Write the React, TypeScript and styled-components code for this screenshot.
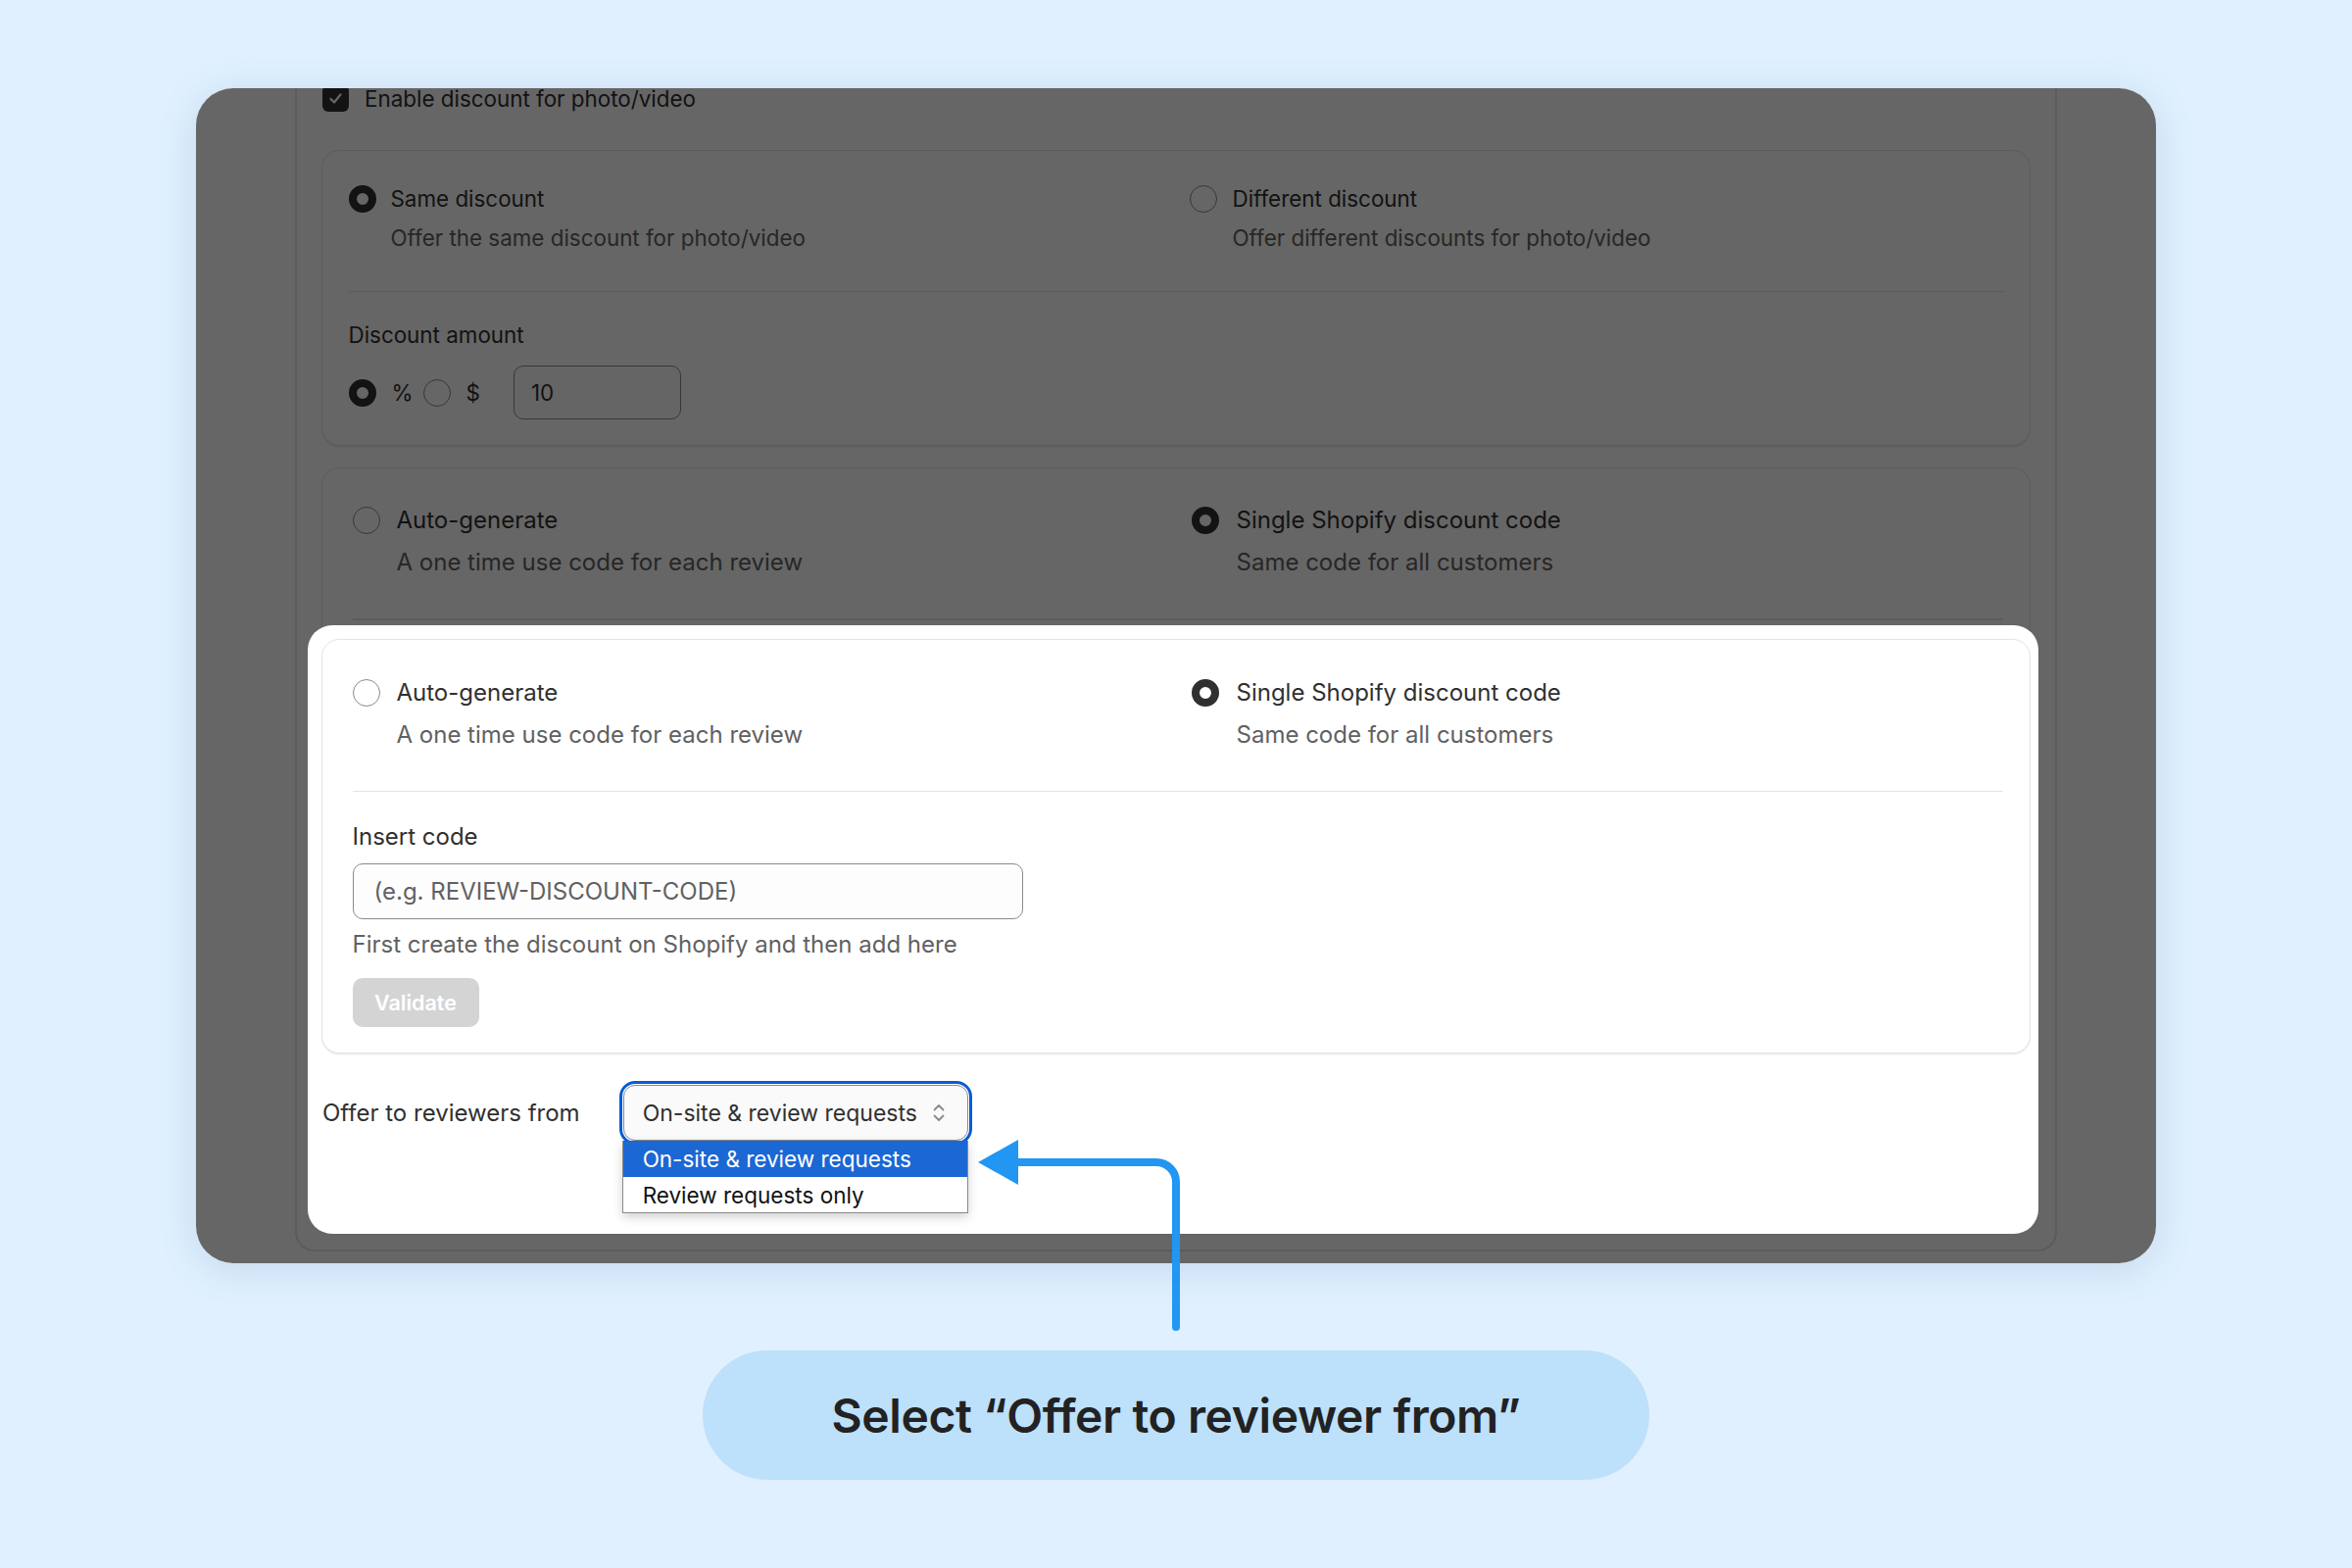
import React from "react";
import styled, { createGlobalStyle } from "styled-components";

const Global = createGlobalStyle`
  html, body { margin: 0; padding: 0; }
  body {
    background: #e0f0fe;
    font-family: Inter, "Noto Sans", "Liberation Sans", sans-serif;
    color: #303030;
  }
  * { box-sizing: border-box; }
`;

const Stage = styled.div`
  position: relative;
  width: 2400px;
  height: 1600px;
  padding-top: 90px;
  display: flex;
  flex-direction: column;
  align-items: center;
`;

const Panel = styled.div`
  position: relative;
  width: 2000px;
  height: 1199px;
  border-radius: 38px;
  overflow: hidden;
  background: #ffffff;
  box-shadow: 0 6px 40px rgba(50, 100, 150, 0.16);
`;

const PageCard = styled.div`
  margin: -23px 0 0 101px;
  width: 1798px;
  height: 1210px;
  border: 2px solid #e3e3e3;
  border-radius: 20px;
  padding: 18px 25px 0 25px;
  display: flex;
  flex-direction: column;
`;

const Dimmer = styled.div`
  position: absolute;
  inset: 0;
  background: rgba(0, 0, 0, 0.6);
  z-index: 1;
`;

const Spotlight = styled.div`
  position: absolute;
  left: 114px;
  top: 548px;
  width: 1766px;
  height: 621px;
  background: #ffffff;
  border-radius: 25px;
  z-index: 2;
  padding: 14px 8px 0 14px;
  display: flex;
  flex-direction: column;
`;

const CheckRow = styled.div`
  display: flex;
  align-items: center;
  gap: 16px;
  margin-left: 1px;
  height: 27px;
  font-size: 22.4px;
  line-height: 27px;
  color: #303030;
`;

const CheckBox = styled.span`
  width: 27px;
  height: 27px;
  border-radius: 6px;
  background: #303030;
  display: flex;
  align-items: center;
  justify-content: center;
`;

const Card = styled.div<{ $pt: number; $pl: number; $pr: number; $pb: number; $mt: number; $fs: number }>`
  margin-top: ${(p) => p.$mt}px;
  border: 1.5px solid #e3e3e3;
  border-radius: 18px;
  box-shadow: 0 1.5px 0 rgba(0, 0, 0, 0.07);
  padding: ${(p) => `${p.$pt}px ${p.$pr}px ${p.$pb}px ${p.$pl}px`};
  display: flex;
  flex-direction: column;
  background: #ffffff;
  flex-shrink: 0;
  font-size: ${(p) => p.$fs}px;
`;

const OptionGrid = styled.div<{ $col: number }>`
  display: grid;
  grid-template-columns: ${(p) => p.$col}px 1fr;
`;

const Option = styled.div<{ $gap: number }>`
  display: flex;
  align-items: flex-start;
  gap: ${(p) => p.$gap}px;
`;

const Radio = styled.span<{ $on?: boolean }>`
  width: 28px;
  height: 28px;
  flex-shrink: 0;
  border-radius: 50%;
  border: ${(p) => (p.$on ? "8px solid #303030" : "1.5px solid #8a8a8a")};
  background: #ffffff;
`;

const OptionText = styled.div<{ $descGap: number }>`
  display: flex;
  flex-direction: column;
  gap: ${(p) => p.$descGap}px;
`;

const Title = styled.div`
  line-height: 28px;
  color: #303030;
`;

const Desc = styled.div`
  line-height: 28px;
  color: #616161;
`;

const Divider = styled.div<{ $mt: number }>`
  margin-top: ${(p) => p.$mt}px;
  height: 1.5px;
  background: #e3e3e3;
`;

const FieldLabel = styled.div<{ $mt: number }>`
  margin-top: ${(p) => p.$mt}px;
  line-height: 28px;
  color: #303030;
`;

const AmountRow = styled.div`
  margin-top: 17px;
  display: flex;
  align-items: center;
  height: 55px;
  color: #303030;
`;

const Unit = styled.span<{ $ml: number; $mr: number }>`
  margin-left: ${(p) => p.$ml}px;
  margin-right: ${(p) => p.$mr}px;
`;

const TextInput = styled.div<{ $w: number; $h: number; $muted?: boolean }>`
  width: ${(p) => p.$w}px;
  height: ${(p) => p.$h}px;
  border: 1.5px solid #8a8a8a;
  border-radius: 10px;
  background: #fdfdfd;
  display: flex;
  align-items: center;
  padding-left: ${(p) => (p.$muted ? 21 : 17)}px;
  color: ${(p) => (p.$muted ? "#616161" : "#303030")};
`;

const InputWrap = styled.div`
  margin-top: 12.5px;
`;

const Helper = styled.div`
  margin-top: 12px;
  line-height: 28px;
  color: #616161;
`;

const ValidateButton = styled.button`
  margin-top: 20px;
  width: 129px;
  height: 50px;
  border: none;
  border-radius: 10px;
  background: #d4d4d4;
  color: #ffffff;
  font-family: inherit;
  font-size: 21.5px;
  font-weight: 600;
  padding: 0;
`;

const OfferRow = styled.div`
  margin-top: 32px;
  margin-left: 1px;
  display: flex;
  align-items: center;
  gap: 44px;
  font-size: 24px;
  color: #303030;
`;

const SelectWrap = styled.div`
  position: relative;
`;

const SelectBox = styled.div`
  width: 352px;
  height: 57px;
  border: 1.5px solid #8a8a8a;
  border-radius: 12px;
  background: #fafafa;
  outline: 3.5px solid #0a5bd6;
  outline-offset: 1px;
  display: flex;
  align-items: center;
  justify-content: space-between;
  padding: 0 22px 0 19px;
  font-size: 23px;
  color: #303030;
`;

const Menu = styled.div`
  position: absolute;
  left: -1px;
  top: 57px;
  width: 353px;
  background: #ffffff;
  border: 1.5px solid #8a8a8a;
  border-top: none;
  box-shadow: 0 4px 10px rgba(0, 0, 0, 0.18);
  z-index: 3;
`;

const MenuItem = styled.div<{ $active?: boolean; $h: number }>`
  height: ${(p) => p.$h}px;
  display: flex;
  align-items: center;
  padding-left: 20px;
  font-size: 22.5px;
  background: ${(p) => (p.$active ? "#1b67d4" : "#ffffff")};
  color: ${(p) => (p.$active ? "#ffffff" : "#111111")};
`;

const ArrowSvg = styled.svg`
  position: absolute;
  left: 980px;
  top: 1150px;
  z-index: 5;
  overflow: visible;
`;

const Pill = styled.div`
  margin-top: 89px;
  width: 966px;
  height: 132px;
  border-radius: 66px;
  background: #bde0fb;
  display: flex;
  align-items: center;
  justify-content: center;
  font-size: 48px;
  font-weight: 600;
  letter-spacing: -0.4px;
  color: #222222;
`;

const Check = () => (
  <svg width="17" height="17" viewBox="0 0 17 17">
    <path d="M3.5 9 L7 12.5 L13.5 4.5" fill="none" stroke="#ffffff" strokeWidth="2.2" strokeLinecap="round" strokeLinejoin="round" />
  </svg>
);

const UpDown = () => (
  <svg width="14" height="21" viewBox="0 0 14 21">
    <path d="M2.5 7.5 L7 3 L11.5 7.5" fill="none" stroke="#8a8a8a" strokeWidth="1.8" strokeLinecap="round" strokeLinejoin="round" />
    <path d="M2.5 13.5 L7 18 L11.5 13.5" fill="none" stroke="#8a8a8a" strokeWidth="1.8" strokeLinecap="round" strokeLinejoin="round" />
  </svg>
);

const CodeCard = ({ mt, withBody }: { mt: number; withBody: boolean }) => (
  <Card $mt={mt} $pt={39.5} $pl={30.5} $pr={27.5} $pb={26.5} $fs={24}>
    <OptionGrid $col={856}>
      <Option $gap={17}>
        <Radio />
        <OptionText $descGap={15}>
          <Title>Auto-generate</Title>
          <Desc>A one time use code for each review</Desc>
        </OptionText>
      </Option>
      <Option $gap={18}>
        <Radio $on />
        <OptionText $descGap={15}>
          <Title>Single Shopify discount code</Title>
          <Desc>Same code for all customers</Desc>
        </OptionText>
      </Option>
    </OptionGrid>
    <Divider $mt={43} />
    {withBody && (
      <>
        <FieldLabel $mt={32}>Insert code</FieldLabel>
        <InputWrap>
          <TextInput $w={684} $h={57} $muted>
            (e.g. REVIEW-DISCOUNT-CODE)
          </TextInput>
        </InputWrap>
        <Helper>First create the discount on Shopify and then add here</Helper>
        <ValidateButton>Validate</ValidateButton>
      </>
    )}
  </Card>
);

export default function App() {
  return (
    <>
      <Global />
      <Stage>
        <Panel>
          <PageCard>
            <CheckRow>
              <CheckBox>
                <Check />
              </CheckBox>
              Enable discount for photo/video
            </CheckRow>
            <Card $mt={39} $pt={34.5} $pl={26.5} $pr={26.5} $pb={25.5} $fs={22.4}>
              <OptionGrid $col={858}>
                <Option $gap={15}>
                  <Radio $on />
                  <OptionText $descGap={12}>
                    <Title>Same discount</Title>
                    <Desc>Offer the same discount for photo/video</Desc>
                  </OptionText>
                </Option>
                <Option $gap={16}>
                  <Radio />
                  <OptionText $descGap={12}>
                    <Title>Different discount</Title>
                    <Desc>Offer different discounts for photo/video</Desc>
                  </OptionText>
                </Option>
              </OptionGrid>
              <Divider $mt={40} />
              <FieldLabel $mt={30}>Discount amount</FieldLabel>
              <AmountRow>
                <Radio $on />
                <Unit $ml={16} $mr={10}>%</Unit>
                <Radio />
                <Unit $ml={16} $mr={34}>$</Unit>
                <TextInput $w={171} $h={55}>10</TextInput>
              </AmountRow>
            </Card>
            <CodeCard mt={22} withBody={false} />
          </PageCard>
          <Dimmer />
          <Spotlight>
            <CodeCard mt={0} withBody />
            <OfferRow>
              <span>Offer to reviewers from</span>
              <SelectWrap>
                <SelectBox>
                  <span>On-site &amp; review requests</span>
                  <UpDown />
                </SelectBox>
                <Menu>
                  <MenuItem $active $h={37}>On-site &amp; review requests</MenuItem>
                  <MenuItem $h={36}>Review requests only</MenuItem>
                </Menu>
              </SelectWrap>
            </OfferRow>
          </Spotlight>
        </Panel>
        <ArrowSvg width="240" height="220" viewBox="980 1150 240 220">
          <path d="M1036 1186 H1180 A20 20 0 0 1 1200 1206 V1354" fill="none" stroke="#2196f3" strokeWidth="8" strokeLinecap="round" strokeLinejoin="round" />
          <polygon points="998,1186 1039,1163 1039,1209" fill="#2196f3" />
        </ArrowSvg>
        <Pill>Select “Offer to reviewer from”</Pill>
      </Stage>
    </>
  );
}
